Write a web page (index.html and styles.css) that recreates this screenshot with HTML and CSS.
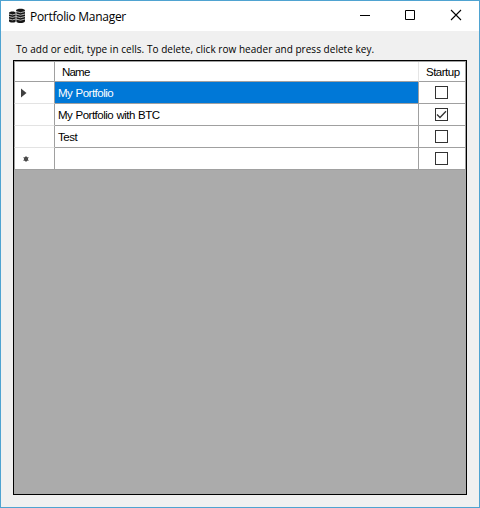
FILE: index.html
```html
<!DOCTYPE html>
<html lang="en">
<head>
<meta charset="utf-8">
<title>Portfolio Manager</title>
<link rel="stylesheet" href="styles.css">
</head>
<body>
<div class="window">
  <header class="titlebar">
    <svg class="app-icon" width="16" height="16" viewBox="0 0 16 16">
      <g fill="#161616">
        <path d="M0 5c0-2 7-2 7 0v8c0 2-7 2-7 0z"/>
        <path d="M7 2.500c0-2.500 9-2.500 9 0v10.500c0 2.800-9 2.800-9 0z"/>
      </g>
      <g fill="none" stroke="#ddd" stroke-width=".8">
        <path d="M0 6q3.500 1.800 6.800 0M0 8.500q3.500 1.800 6.800 0M0 11q3.500 1.800 6.800 0M7 3.500q4.500 2.400 9 0M7 6q4.500 2.400 9 0M7 8.500q4.500 2.400 9 0M7 11q4.500 2.400 9 0M7 3v11"/>
      </g>
    </svg>
    <h1 class="title">Portfolio Manager</h1>
    <div class="controls">
      <svg width="46" height="28" viewBox="0 0 46 28"><path d="M19 14.500h10" stroke="#000"/></svg>
      <svg width="46" height="28" viewBox="0 0 46 28"><path d="M18.500 9.500h9v9h-9z" fill="none" stroke="#000"/></svg>
      <svg width="46" height="28" viewBox="0 0 46 28"><path d="M18 9l10 10M28 9l-10 10" stroke="#000" stroke-width="1.100"/></svg>
    </div>
  </header>
  <main class="content">
    <p class="hint">To add or edit, type in cells. To delete, click row header and press delete key.</p>
    <div class="grid">
      <div class="row head">
        <div class="stub"></div><div class="name"><span>Name</span></div><div class="startup"><span>Startup</span></div>
      </div>
      <div class="row selected">
        <div class="stub"><svg width="6" height="10" viewBox="0 0 6 10"><path d="M0 .500v9L5.500 5z" fill="#404040"/></svg></div>
        <div class="name"><span>My Portfolio</span></div>
        <div class="startup"><i class="check"></i></div>
      </div>
      <div class="row">
        <div class="stub"></div>
        <div class="name"><span>My Portfolio with BTC</span></div>
        <div class="startup"><i class="check"><svg width="11" height="11" viewBox="0 0 11 11"><path d="M1 5.500l3 3 6-6.300" fill="none" stroke="#333" stroke-width="1.300"/></svg></i></div>
      </div>
      <div class="row">
        <div class="stub"></div>
        <div class="name"><span>Test</span></div>
        <div class="startup"><i class="check"></i></div>
      </div>
      <div class="row new">
        <div class="stub"><svg width="6" height="6" viewBox="0 0 6 6"><circle cx="3" cy="3" r="2.200" fill="#404040"/><path d="M3 0v6M.4 1.500l5.200 3M.4 4.500l5.200-3" stroke="#505050" stroke-width=".8"/></svg></div>
        <div class="name"></div>
        <div class="startup"><i class="check"></i></div>
      </div>
    </div>
  </main>
</div>
</body>
</html>
```
FILE: styles.css
```css
* { box-sizing: border-box; }
body { margin: 0; font-family: "Open Sans", "Noto Sans", sans-serif; color: #000; }
.window { width: 480px; height: 508px; border: 1px solid #4fa3d1; background: #f0f0f0; display: flex; flex-direction: column; }
.titlebar { height: 30px; flex: none; background: #fff; display: flex; align-items: flex-start; }
.app-icon { margin: 7px 5px 0 8px; }
.title { margin: 7px 0 0; font-size: 12px; line-height: 17px; font-weight: 400; letter-spacing: -0.29px; white-space: nowrap; }
.controls { display: flex; margin-left: auto; }
.controls svg { display: block; }
.content { flex: 1; display: flex; flex-direction: column; padding: 0 12px 12px; }
.hint { height: 29px; margin: 0; padding: 11px 0 0 3px; font-size: 10px; line-height: 14px; letter-spacing: 0.035px; white-space: nowrap; }
.grid { flex: 1; border: 1px solid #000; background: #ababab; box-shadow: inset 0 1px #a0a0a0; padding-top: 1px; }
.row { display: flex; height: 22px; font-family: "Liberation Sans", Arial, sans-serif; font-size: 11.5px; line-height: 22px; white-space: nowrap; }
.row.head { height: 20px; line-height: 20px; }
.stub { width: 41px; border: solid #a0a0a0; border-width: 0 1px; border-bottom: 1px solid #e3e3e3; background: #fff; display: flex; align-items: center; padding-left: 6px; }
.name { width: 364px; border-right: 1px solid #a0a0a0; border-bottom: 1px solid #a0a0a0; background: #fff; padding-left: 3px; }
.startup { width: 47px; border-right: 1px solid #a0a0a0; border-bottom: 1px solid #a0a0a0; background: #fff; display: flex; align-items: center; padding-left: 16px; }
.head .startup { padding-left: 7px; }
.head .stub, .new .stub { border-bottom-color: #a0a0a0; }
.head .name { padding-left: 7px; border-right-color: #e5e5e5; }
.new .stub { padding-left: 8px; }
.selected .name { background: #0078d7; color: #fff; }
.row span { letter-spacing: -0.5px; word-spacing: 0.5px; }
.head .name span { letter-spacing: -0.8px; }
.check { width: 13px; height: 13px; border: 1px solid #333; background: #fff; }
.check svg { display: block; }
```
